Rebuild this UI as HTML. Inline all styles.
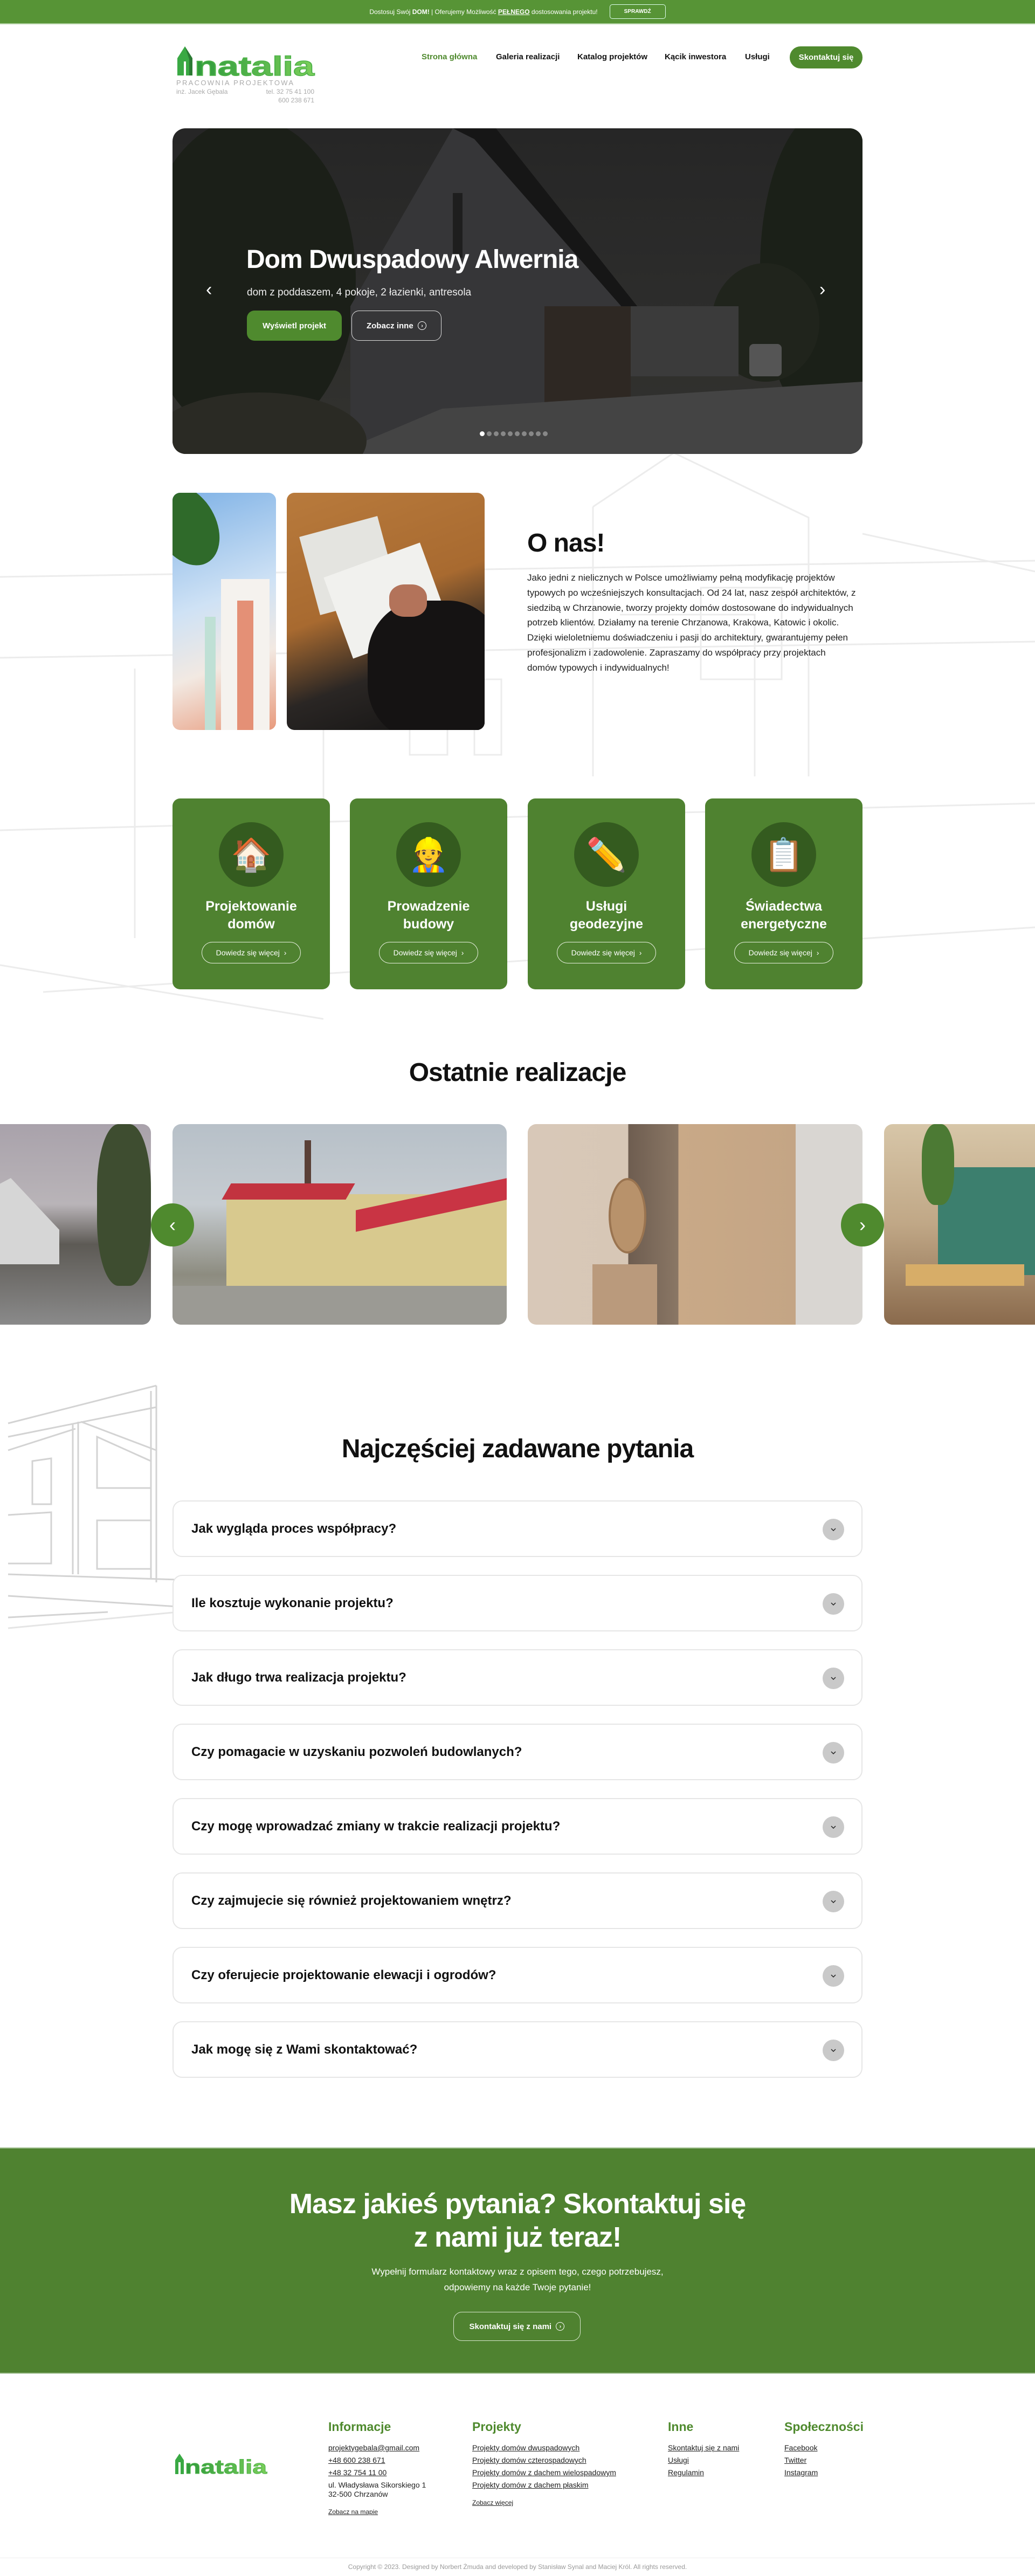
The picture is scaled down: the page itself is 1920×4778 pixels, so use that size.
<!DOCTYPE html>
<html lang="pl"><head><meta charset="utf-8">
<style>
*{box-sizing:border-box;margin:0;padding:0}
body{width:1920px;height:4778px;position:relative;background:#fff;font-family:"Liberation Sans",Arial,sans-serif;color:#111;overflow:hidden}
.abs{position:absolute}
.topbar{left:0;top:0;width:1920px;height:45px;background:#579436;border-bottom:2px solid #a9cc98;color:#fff;font-size:12px;display:flex;align-items:center;justify-content:center;gap:22px}
.topbar .b{border:1.5px solid #dfe;border-radius:5px;padding:7px 26px;font-size:10px;font-weight:bold}
.nav{top:97px;font-size:15px;font-weight:bold;color:#111}
.btn{display:flex;align-items:center;justify-content:center;border-radius:20px;font-weight:bold}
.card{top:1481px;width:292px;height:354px;background:#4f8230;border-radius:14px;color:#fff;text-align:center}
.card .ic{position:absolute;left:86px;top:44px;width:120px;height:120px;border-radius:50%;background:#345b1f;display:flex;align-items:center;justify-content:center;font-size:60px}
.card h3{position:absolute;top:184px;left:0;width:100%;font-size:25px;line-height:33px;font-weight:bold}
.card .m{position:absolute;left:54px;top:266px;width:184px;height:40px;border:1.5px solid #e8f0e0;border-radius:20px;font-size:14px;display:flex;align-items:center;justify-content:center}
.faq{left:320px;width:1280px;height:105px;background:#fff;border:2px solid #e6e6e6;border-radius:18px;display:flex;align-items:center;padding-left:33px;font-size:24px;font-weight:bold}
.faq .ch{position:absolute;right:32px;top:32px;width:40px;height:40px;border-radius:50%;background:#c9c9c9;display:flex;align-items:center;justify-content:center}
.fh{top:4488px;font-size:23px;font-weight:bold;color:#4f8a2e}
.fl{font-size:14px;color:#222;text-decoration:underline;line-height:23px}
h2{font-size:48px;font-weight:bold;letter-spacing:-1px}
</style></head><body>

<svg class="abs" style="left:0;top:840px" width="1920" height="1100" stroke="#ececec" stroke-width="3" fill="none">
<path d="M0 230 L1920 200 M0 380 L1920 350 M1100 100 L1250 0 L1500 120 L1500 600 M1100 100 L1100 600 M1600 150 L1920 220 M0 700 L1920 650 M250 400 L250 900 M600 400 L600 900 M1150 300 L1400 300 L1400 600 M80 1000 L1920 880 M0 950 L600 1050"/>
<path d="M1300 250 L1450 250 L1450 420 L1300 420Z M760 420 L830 420 L830 560 L760 560Z M880 420 L930 420 L930 560 L880 560Z"/>
</svg>

<div class="abs topbar"><span>Dostosuj Swój <b>DOM!</b> | Oferujemy Możliwość <b style="text-decoration:underline">PEŁNEGO</b> dostosowania projektu!</span><span class="b">SPRAWDŹ</span></div>

<svg class="abs" style="left:325px;top:84px" width="262" height="110">
<defs><linearGradient id="g" x1="0" y1="0" x2="1" y2="0"><stop offset="0" stop-color="#2e9a3c"/><stop offset="1" stop-color="#7bcf5a"/></linearGradient></defs>
<path d="M4 56 L4 24 L18 2 L32 24 L32 56 L20 56 L20 30 L16 30 L16 56Z" fill="#3aa944"/>
<path d="M18 2 L32 24 L32 56 L26 56 L26 26Z" fill="#2b7a33"/>
<text x="36" y="56" font-family="Liberation Sans" font-weight="bold" font-size="50" fill="url(#g)" textLength="222" lengthAdjust="spacingAndGlyphs" stroke="#4fb34a" stroke-width="1.5">natalia</text>
<text x="2" y="74" font-family="Liberation Sans" font-size="13" fill="#aaa" letter-spacing="2.3">PRACOWNIA PROJEKTOWA</text>
<text x="2" y="90" font-family="Liberation Sans" font-size="12" fill="#aaa">inż. Jacek Gębala</text>
<text x="258" y="90" text-anchor="end" font-family="Liberation Sans" font-size="12" fill="#aaa">tel. 32 75 41 100</text>
<text x="258" y="106" text-anchor="end" font-family="Liberation Sans" font-size="12" fill="#aaa">600 238 671</text>
</svg>
<div class="abs nav" style="left:782px;color:#4f8a2e">Strona główna</div>
<div class="abs nav" style="left:920px">Galeria realizacji</div>
<div class="abs nav" style="left:1071px">Katalog projektów</div>
<div class="abs nav" style="left:1233px">Kącik inwestora</div>
<div class="abs nav" style="left:1382px">Usługi</div>
<div class="abs btn" style="left:1465px;top:86px;width:135px;height:41px;background:#4f8a2e;color:#fff;font-size:15px">Skontaktuj się</div>

<div class="abs" style="left:320px;top:238px;width:1280px;height:604px;border-radius:24px;overflow:hidden;background:linear-gradient(180deg,#262626 0%,#2c2c2b 50%,#33332f 100%)">
<svg width="1280" height="604" class="abs" style="left:0;top:0">
<ellipse cx="140" cy="280" rx="200" ry="300" fill="#1b1f18"/>
<ellipse cx="1220" cy="260" rx="130" ry="300" fill="#1b2018"/>
<ellipse cx="1100" cy="360" rx="100" ry="110" fill="#20241c"/>
<path d="M330 604 L330 330 L520 0 L600 0 L850 330 L850 604Z" fill="#363638"/>
<path d="M520 0 L600 0 L870 340 L850 350 L560 20Z" fill="#161616"/>
<rect x="520" y="120" width="18" height="120" fill="#1e1e1e"/>
<rect x="690" y="330" width="160" height="240" fill="#2e2823"/>
<rect x="850" y="330" width="200" height="130" fill="#3b3b3b"/>
<path d="M300 604 L500 520 L1280 470 L1280 604Z" fill="#444"/>
<ellipse cx="160" cy="580" rx="200" ry="90" fill="#2a2a24"/>
<rect x="1070" y="400" width="60" height="60" rx="8" fill="#555"/>
</svg>
<div class="abs" style="left:137px;top:216px;font-size:48px;font-weight:bold;color:#fff;letter-spacing:-1px">Dom Dwuspadowy Alwernia</div>
<div class="abs" style="left:138px;top:294px;font-size:19px;color:#eee">dom z poddaszem, 4 pokoje, 2 łazienki, antresola</div>
<div class="abs btn" style="left:138px;top:338px;height:56px;width:176px;background:#4f8a2e;color:#fff;font-size:15px;border-radius:14px">Wyświetl projekt</div>
<div class="abs btn" style="left:332px;top:338px;width:167px;height:56px;border:1.5px solid #ddd;color:#fff;font-size:15px;border-radius:14px">Zobacz inne &nbsp;<span style="border:1px solid #fff;border-radius:50%;width:16px;height:16px;font-size:10px;display:inline-flex;align-items:center;justify-content:center">›</span></div>
<div class="abs" style="left:62px;top:280px;color:#fff;font-size:34px">‹</div>
<div class="abs" style="left:1200px;top:280px;color:#fff;font-size:34px">›</div>
<div class="abs" style="left:570px;top:562px;display:flex;gap:4px">
<i style="width:9px;height:9px;border-radius:50%;background:#fff"></i><i style="width:9px;height:9px;border-radius:50%;background:#888"></i><i style="width:9px;height:9px;border-radius:50%;background:#888"></i><i style="width:9px;height:9px;border-radius:50%;background:#888"></i><i style="width:9px;height:9px;border-radius:50%;background:#888"></i><i style="width:9px;height:9px;border-radius:50%;background:#888"></i><i style="width:9px;height:9px;border-radius:50%;background:#888"></i><i style="width:9px;height:9px;border-radius:50%;background:#888"></i><i style="width:9px;height:9px;border-radius:50%;background:#888"></i><i style="width:9px;height:9px;border-radius:50%;background:#888"></i>
</div>
</div>

<div class="abs" style="left:320px;top:914px;width:192px;height:440px;border-radius:14px;overflow:hidden;background:linear-gradient(160deg,#7fb2e6 0%,#cfe2f5 45%,#f2e9e2 70%,#e89a7c 100%)">
<div class="abs" style="left:90px;top:160px;width:90px;height:280px;background:#f5f2ee"></div>
<div class="abs" style="left:120px;top:200px;width:30px;height:240px;background:#e49076"></div>
<div class="abs" style="left:60px;top:230px;width:20px;height:210px;background:#bfe0d5"></div>
<div class="abs" style="left:-30px;top:-20px;width:110px;height:160px;border-radius:50%;background:#2f6a2a;transform:rotate(-30deg)"></div>
</div>
<div class="abs" style="left:532px;top:914px;width:367px;height:440px;border-radius:14px;overflow:hidden;background:linear-gradient(160deg,#b87a3c 0%,#a86a30 45%,#2a2624 70%,#111 100%)">
<div class="abs" style="left:40px;top:60px;width:150px;height:150px;background:#e4e4e0;transform:rotate(-15deg)"></div>
<div class="abs" style="left:90px;top:120px;width:190px;height:160px;background:#f1f1ee;transform:rotate(-20deg)"></div>
<div class="abs" style="left:150px;top:200px;width:250px;height:260px;border-radius:40%;background:#151313"></div>
<div class="abs" style="left:190px;top:170px;width:70px;height:60px;border-radius:40%;background:#b3735a"></div>
</div>
<h2 class="abs" style="left:978px;top:980px">O nas!</h2>
<p class="abs" style="left:978px;top:1058px;width:610px;font-size:17px;line-height:27.8px;color:#222">Jako jedni z nielicznych w Polsce umożliwiamy pełną modyfikację projektów typowych po wcześniejszych konsultacjach. Od 24 lat, nasz zespół architektów, z siedzibą w Chrzanowie, tworzy projekty domów dostosowane do indywidualnych potrzeb klientów. Działamy na terenie Chrzanowa, Krakowa, Katowic i okolic. Dzięki wieloletniemu doświadczeniu i pasji do architektury, gwarantujemy pełen profesjonalizm i zadowolenie. Zapraszamy do współpracy przy projektach domów typowych i indywidualnych!</p>

<div class="abs card" style="left:320px"><div class="ic">🏠</div><h3>Projektowanie<br>domów</h3><div class="m">Dowiedz się więcej &nbsp;›</div></div>
<div class="abs card" style="left:649px"><div class="ic">👷</div><h3>Prowadzenie<br>budowy</h3><div class="m">Dowiedz się więcej &nbsp;›</div></div>
<div class="abs card" style="left:979px"><div class="ic">✏️</div><h3>Usługi<br>geodezyjne</h3><div class="m">Dowiedz się więcej &nbsp;›</div></div>
<div class="abs card" style="left:1308px"><div class="ic">📋</div><h3>Świadectwa<br>energetyczne</h3><div class="m">Dowiedz się więcej &nbsp;›</div></div>

<h2 class="abs" style="left:0;width:1920px;text-align:center;top:1962px">Ostatnie realizacje</h2>
<div class="abs" style="left:-40px;top:2085px;width:320px;height:372px;border-radius:16px;overflow:hidden;background:linear-gradient(180deg,#a9a2ab 0%,#b9b4b8 40%,#5d5a55 60%,#8a8a8a 100%)">
<div class="abs" style="left:0;top:100px;width:150px;height:160px;background:#d6d6d6;clip-path:polygon(0 20%,40% 0,100% 60%,100% 100%,0 100%)"></div>
<div class="abs" style="left:220px;top:0;width:100px;height:300px;background:#3e4d30;border-radius:40%"></div>
</div>
<div class="abs" style="left:320px;top:2085px;width:620px;height:372px;border-radius:16px;overflow:hidden;background:linear-gradient(180deg,#b7c0c8 0%,#c6ccd1 40%,#8d8c80 75%,#a7a6a0 100%)">
<div class="abs" style="left:100px;top:130px;width:520px;height:190px;background:#d8c98e"></div>
<div class="abs" style="left:100px;top:110px;width:230px;height:30px;background:#c2333f;transform:skewX(-30deg)"></div>
<div class="abs" style="left:340px;top:130px;width:280px;height:40px;background:#c93444;transform:skewY(-12deg)"></div>
<div class="abs" style="left:245px;top:30px;width:12px;height:80px;background:#5a4037"></div>
<div class="abs" style="left:0;top:300px;width:620px;height:72px;background:#9b9a94"></div>
</div>
<div class="abs" style="left:979px;top:2085px;width:621px;height:372px;border-radius:16px;overflow:hidden;background:linear-gradient(90deg,#d8c8b8 0%,#d7c7b6 30%,#6e5d50 30%,#8a7765 45%,#c9a987 45%,#c4a585 80%,#d9d6d2 80%)">
<div class="abs" style="left:150px;top:100px;width:70px;height:140px;border-radius:50%;border:4px solid #9a7450;background:#b8926b"></div>
<div class="abs" style="left:120px;top:260px;width:120px;height:112px;background:#ba9a7c"></div>
</div>
<div class="abs" style="left:1640px;top:2085px;width:320px;height:372px;border-radius:16px;overflow:hidden;background:linear-gradient(180deg,#d7c6a8 0%,#c0a786 50%,#8a6a4c 100%)">
<div class="abs" style="left:100px;top:80px;width:200px;height:200px;background:#3c7f6e"></div>
<div class="abs" style="left:70px;top:0;width:60px;height:150px;background:#4c7a34;border-radius:40%"></div>
<div class="abs" style="left:40px;top:260px;width:220px;height:40px;background:#d7ad68"></div>
</div>
<div class="abs btn" style="left:280px;top:2232px;width:80px;height:80px;border-radius:50%;background:#4f8a2e;color:#fff;font-size:36px;font-weight:normal">‹</div>
<div class="abs btn" style="left:1560px;top:2232px;width:80px;height:80px;border-radius:50%;background:#4f8a2e;color:#fff;font-size:36px;font-weight:normal">›</div>

<svg class="abs" style="left:0;top:2520px" width="330" height="1180" stroke="#d3d3d3" stroke-width="3" fill="none">
<path d="M15 120 L290 50 M15 145 L290 90 M15 170 L140 130 M290 50 L290 415 M280 60 L280 410 M145 117 L145 400 M135 120 L135 400 M150 117 L290 170 M60 190 L95 185 L95 270 L60 270Z M180 145 L280 190 L280 240 L180 240Z M180 300 L280 300 L280 390 L180 390Z M15 290 L95 285 L95 380 L15 380 M15 400 L330 410 M15 440 L330 460 M15 480 L200 470"/>
<path d="M15 500 L330 470" stroke="#e5e5e5"/>
</svg>

<h2 class="abs" style="left:0;width:1920px;text-align:center;top:2660px">Najczęściej zadawane pytania</h2>
<div class="abs faq" style="top:2783px">Jak wygląda proces współpracy?<span class="ch"><svg width="10" height="7"><path d="M1 1 L5 5 L9 1" stroke="#222" stroke-width="1.5" fill="none"/></svg></span></div>
<div class="abs faq" style="top:2921px">Ile kosztuje wykonanie projektu?<span class="ch"><svg width="10" height="7"><path d="M1 1 L5 5 L9 1" stroke="#222" stroke-width="1.5" fill="none"/></svg></span></div>
<div class="abs faq" style="top:3059px">Jak długo trwa realizacja projektu?<span class="ch"><svg width="10" height="7"><path d="M1 1 L5 5 L9 1" stroke="#222" stroke-width="1.5" fill="none"/></svg></span></div>
<div class="abs faq" style="top:3197px">Czy pomagacie w uzyskaniu pozwoleń budowlanych?<span class="ch"><svg width="10" height="7"><path d="M1 1 L5 5 L9 1" stroke="#222" stroke-width="1.5" fill="none"/></svg></span></div>
<div class="abs faq" style="top:3335px">Czy mogę wprowadzać zmiany w trakcie realizacji projektu?<span class="ch"><svg width="10" height="7"><path d="M1 1 L5 5 L9 1" stroke="#222" stroke-width="1.5" fill="none"/></svg></span></div>
<div class="abs faq" style="top:3473px">Czy zajmujecie się również projektowaniem wnętrz?<span class="ch"><svg width="10" height="7"><path d="M1 1 L5 5 L9 1" stroke="#222" stroke-width="1.5" fill="none"/></svg></span></div>
<div class="abs faq" style="top:3611px">Czy oferujecie projektowanie elewacji i ogrodów?<span class="ch"><svg width="10" height="7"><path d="M1 1 L5 5 L9 1" stroke="#222" stroke-width="1.5" fill="none"/></svg></span></div>
<div class="abs faq" style="top:3749px">Jak mogę się z Wami skontaktować?<span class="ch"><svg width="10" height="7"><path d="M1 1 L5 5 L9 1" stroke="#222" stroke-width="1.5" fill="none"/></svg></span></div>

<div class="abs" style="left:0;top:3983px;width:1920px;height:420px;background:#4f8230;border-top:2px solid #a9c59a;border-bottom:2px solid #a9c59a;color:#fff;text-align:center">
<div class="abs" style="left:0;width:1920px;top:72px;font-size:52px;font-weight:bold;line-height:62px;letter-spacing:-1px">Masz jakieś pytania? Skontaktuj się<br>z nami już teraz!</div>
<div class="abs" style="left:0;width:1920px;top:214px;font-size:17px;line-height:29px">Wypełnij formularz kontaktowy wraz z opisem tego, czego potrzebujesz,<br>odpowiemy na każde Twoje pytanie!</div>
<div class="abs btn" style="left:841px;top:303px;width:236px;height:54px;border:1.5px solid #d8e6cf;border-radius:16px;font-size:15px">Skontaktuj się z nami &nbsp;<span style="border:1px solid #fff;border-radius:50%;width:16px;height:16px;font-size:10px;display:inline-flex;align-items:center;justify-content:center">›</span></div>
</div>

<svg class="abs" style="left:323px;top:4551px" width="180" height="40">
<path d="M2 38 L2 12 L10 0 L18 12 L18 38 L12 38 L12 16 L8 16 L8 38Z" fill="#3aa944"/>
<text x="20" y="37" font-family="Liberation Sans" font-weight="bold" font-size="36" fill="url(#g)" textLength="152" lengthAdjust="spacingAndGlyphs" stroke="#4fb34a" stroke-width="1">natalia</text>
</svg>
<div class="abs fh" style="left:609px">Informacje</div>
<div class="abs fh" style="left:876px">Projekty</div>
<div class="abs fh" style="left:1239px">Inne</div>
<div class="abs fh" style="left:1455px">Społeczności</div>
<div class="abs fl" style="left:609px;top:4529px">projektygebala@gmail.com<br>+48 600 238 671<br>+48 32 754 11 00<br><span style="text-decoration:none;line-height:17px;display:inline-block;margin-top:3px">ul. Władysława Sikorskiego 1<br>32-500 Chrzanów</span></div>
<div class="abs fl" style="left:609px;top:4648px;font-size:12px">Zobacz na mapie</div>
<div class="abs fl" style="left:876px;top:4529px">Projekty domów dwuspadowych<br>Projekty domów czterospadowych<br>Projekty domów z dachem wielospadowym<br>Projekty domów z dachem płaskim</div>
<div class="abs fl" style="left:876px;top:4631px;font-size:12px">Zobacz więcej</div>
<div class="abs fl" style="left:1239px;top:4529px">Skontaktuj się z nami<br>Usługi<br>Regulamin</div>
<div class="abs fl" style="left:1455px;top:4529px">Facebook<br>Twitter<br>Instagram</div>
<div class="abs" style="left:0;top:4744px;width:1920px;height:1px;background:#eee"></div>
<div class="abs" style="left:0;width:1920px;top:4754px;text-align:center;font-size:12px;color:#999">Copyright © 2023. Designed by Norbert Żmuda and developed by Stanisław Synal and Maciej Król. All rights reserved.</div>
</body></html>
